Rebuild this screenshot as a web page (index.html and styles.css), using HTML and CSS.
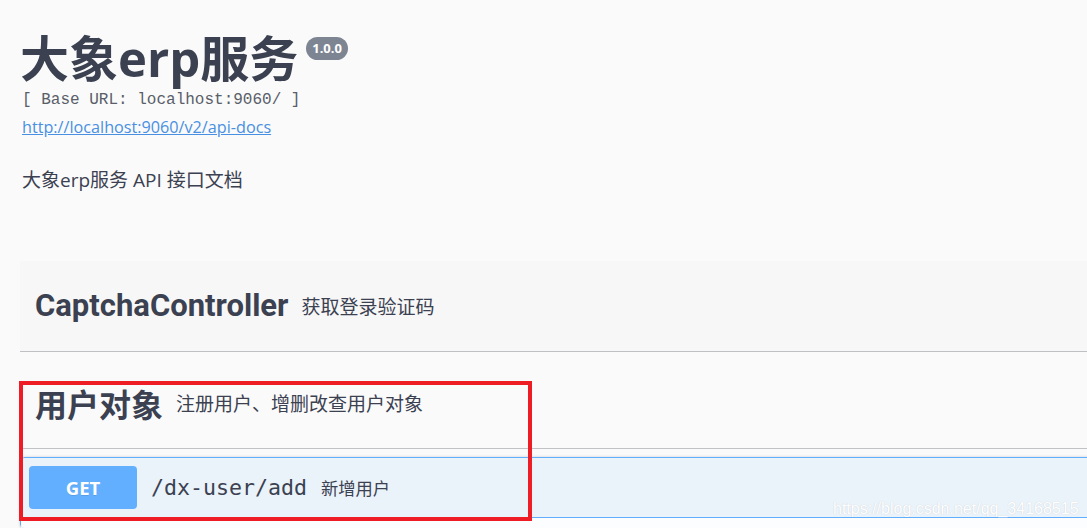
FILE: index.html
```html
<!DOCTYPE html>
<html lang="zh-CN">
<head>
  <meta charset="utf-8"/>
  <meta name="viewport" content="width=device-width, initial-scale=1.0"/>
  <title>大象erp服务</title>
  <link rel="stylesheet" href="styles.css">
</head>
<body>
  <div class="wrapper">
    <div class="info">
      <div class="main">
        <h2 class="title">大象erp服务 <small class="version">1.0.0</small></h2>
        <pre class="base-url">[ Base URL: localhost:9060/ ]</pre>
        <a class="api-link" href="#">http://localhost:9060/v2/api-docs</a>
      </div>
      <div class="description">
        <p>大象erp服务 API 接口文档</p>
      </div>
    </div>

    <div class="tags">
      <div class="tag-section">
        <h4 class="opblock-tag hovered">
          <span class="tag-name latin">CaptchaController</span>
          <small>获取登录验证码</small>
        </h4>
      </div>

      <div class="tag-section">
        <h4 class="opblock-tag">
          <span class="tag-name">用户对象</span>
          <small>注册用户、增删改查用户对象</small>
        </h4>
        <div class="opblock opblock-get">
          <div class="opblock-summary">
            <span class="method">GET</span>
            <span class="path">/dx-user/add</span>
            <span class="summary">新增用户</span>
          </div>
          <div class="opblock-body">
            <div class="section-header"></div>
          </div>
        </div>
      </div>
    </div>
  </div>

  <!-- 标注框和水印 -->
  <div class="mark-box"></div>
  <div class="watermark">https://blog.csdn.net/qq_34168515</div>
</body>
</html>
```

FILE: styles.css
```css
html, body { margin: 0; padding: 0; background: #fafafa; height: 100%; overflow: hidden; }
body { position: relative; font-family: "Open Sans", "Noto Sans CJK SC", sans-serif; color: #3b4151; }
.wrapper { width: 1100px; padding-left: 20px; }

/* 顶部信息 */
.info { padding-top: 30px; }
.title { display: flex; align-items: flex-start; margin: 0; font-size: 49px; line-height: 57px; font-weight: 700; font-family: "Open Sans", "Noto Sans CJK SC", sans-serif; }
.version { margin: 7px 0 0 8px; padding: 3px 6px; border-radius: 57px; background: #7d8492; color: #fff; font-size: 13px; line-height: 17px; font-weight: 700; font-family: "Noto Sans", sans-serif; }
.base-url { margin: 3px 0 0 2px; font-size: 16px; line-height: 20px; font-family: "Liberation Mono", monospace; color: #595e69; }
.api-link { display: inline-block; margin: 6px 0 0 2px; font-size: 16.2px; line-height: 22px; color: #4990e2; font-family: "Open Sans", sans-serif; }
.description p { margin: 30px 0 0 2px; font-size: 19px; line-height: 24px; }

/* 标签分组 */
.tags { margin-top: 69px; }
.tag-section { display: flex; flex-direction: column; }
.opblock-tag { display: flex; align-items: center; height: 91px; margin: 0 0 6px; padding: 0 26px 0 15px; box-sizing: border-box; border-bottom: 1px solid rgba(59, 65, 81, .3); font-weight: 700; }
.opblock-tag.hovered { background: rgba(0, 0, 0, .012); }
.tag-name { font-size: 32px; line-height: 40px; font-family: "Noto Sans CJK SC", sans-serif; }
.tag-name.latin { font-family: Roboto, sans-serif; font-size: 31px; }
.opblock-tag small { flex: 1; padding: 0 13px; font-size: 19px; font-weight: 400; font-family: "Open Sans", "Noto Sans CJK SC", sans-serif; }

/* 接口块 */
.opblock { margin-top: 2px; border: 1px solid #61affe; border-radius: 5px; background: rgba(97, 175, 254, .1); box-shadow: 0 0 3px rgba(0, 0, 0, .19); }
.opblock-summary { display: flex; align-items: center; padding: 8px; border-bottom: 1px solid #61affe; }
.method { min-width: 108px; padding: 8px 0; border-radius: 4px; background: #61affe; color: #fff; text-align: center; font-size: 18.5px; line-height: 27px; font-weight: 700; font-family: "Noto Sans", sans-serif; text-shadow: 0 1px 0 rgba(0, 0, 0, .1); }
.path { padding: 0 14px 0 14px; font-size: 21.6px; font-family: "DejaVu Sans Mono", monospace; }
.summary { font-size: 17.3px; font-family: "Open Sans", "Noto Sans CJK SC", sans-serif; }
.section-header { height: 10px; background: rgba(255, 255, 255, .8); box-shadow: 0 1px 2px rgba(0, 0, 0, .1); }

/* 叠加层 */
.mark-box { position: absolute; left: 19px; top: 381px; width: 505px; height: 132px; border: 4px solid #ee1c25; }
.watermark { position: absolute; left: 833px; top: 500px; font-size: 16px; font-family: "Liberation Sans", sans-serif; color: #fff; text-shadow: 0 0 1px rgba(0, 0, 0, .18); }
```
